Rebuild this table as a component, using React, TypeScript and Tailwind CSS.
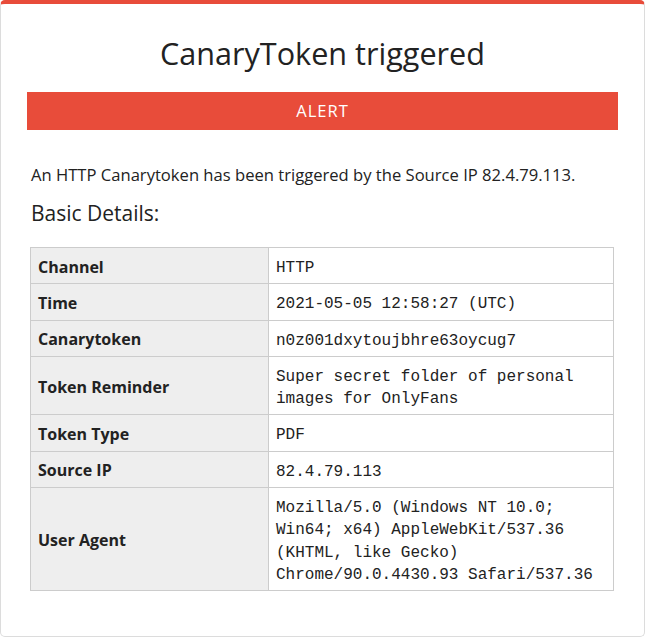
import React from "react";

const rows: { label: string; value: string[] }[] = [
  { label: "Channel", value: ["HTTP"] },
  { label: "Time", value: ["2021-05-05 12:58:27 (UTC)"] },
  { label: "Canarytoken", value: ["n0z001dxytoujbhre63oycug7"] },
  { label: "Token Reminder", value: ["Super secret folder of personal", "images for OnlyFans"] },
  { label: "Token Type", value: ["PDF"] },
  { label: "Source IP", value: ["82.4.79.113"] },
  {
    label: "User Agent",
    value: [
      "Mozilla/5.0 (Windows NT 10.0;",
      "Win64; x64) AppleWebKit/537.36",
      "(KHTML, like Gecko)",
      "Chrome/90.0.4430.93 Safari/537.36",
    ],
  },
];

export default function App() {
  return (
    <div className="w-[645px] h-[637px] bg-white" style={{ fontFamily: '"Open Sans", "Noto Sans", sans-serif' }}>
      <div className="h-[637px] border border-[#dcdcdc] border-t-4 border-t-[#e84c3a] rounded-[5px] px-[26px] text-[#222]">
        <h1 className="text-center text-[30.6px] leading-[30px] pt-[34px] pb-[24px] text-[#222]">CanaryToken triggered</h1>
        <div className="bg-[#e84c3a] text-white text-center text-[16.5px] h-[38px] flex items-center justify-center tracking-[1px]">
          ALERT
        </div>
        <p className="pl-[4px] text-[16.6px] mt-[33px] leading-[24px] whitespace-nowrap">
          An HTTP Canarytoken has been triggered by the Source IP 82.4.79.113.
        </p>
        <h2 className="pl-[4px] text-[21px] mt-[12px] leading-[28px]">Basic Details:</h2>
        <table className="ml-[3px] mt-[20px] w-[584px] border-collapse border border-[#cccccc]">
          <tbody>
            {rows.map((r) => (
              <tr key={r.label}>
                <td className="w-[238px] bg-[#eeeeee] border border-[#cccccc] px-[7px] pt-[7.5px] pb-[5.5px] font-bold text-[16px] leading-[22px] align-middle">
                  {r.label}
                </td>
                <td
                  className="border border-[#cccccc] px-[7px] pt-[9px] pb-[4px] text-[16px] leading-[22.3px] align-middle"
                  style={{ fontFamily: '"Liberation Mono", monospace' }}
                >
                  {r.value.map((v, i) => (
                    <div key={i}>{v}</div>
                  ))}
                </td>
              </tr>
            ))}
          </tbody>
        </table>
      </div>
    </div>
  );
}
